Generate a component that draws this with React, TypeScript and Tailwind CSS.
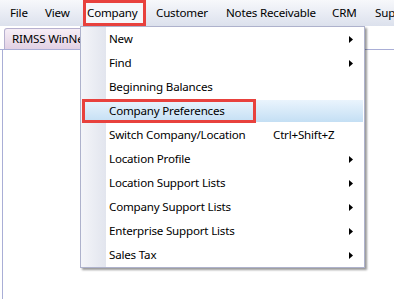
import React from "react";

const ITEMS: { label: string; shortcut?: string; sub?: boolean }[] = [
  { label: "New", sub: true },
  { label: "Find", sub: true },
  { label: "Beginning Balances" },
  { label: "Company Preferences" },
  { label: "Switch Company/Location", shortcut: "Ctrl+Shift+Z" },
  { label: "Location Profile", sub: true },
  { label: "Location Support Lists", sub: true },
  { label: "Company Support Lists", sub: true },
  { label: "Enterprise Support Lists", sub: true },
  { label: "Sales Tax", sub: true },
];

function Arrow() {
  return (
    <svg width="4" height="7" viewBox="0 0 4 7" className="block">
      <path d="M0 0 L4 3.5 L0 7 Z" fill="#000" />
    </svg>
  );
}

export default function App() {
  return (
    <div
      className="relative w-[394px] h-[299px] overflow-hidden bg-white text-[11.6px] tracking-[-0.2px] text-black"
      style={{ fontFamily: '"Noto Sans", sans-serif' }}
    >
      {/* Menu bar */}
      <div className="h-[26px] flex items-stretch bg-gradient-to-b from-[#f7f8fb] to-[#dce1ed] pl-[2px] whitespace-nowrap overflow-hidden">
        <div className="w-[35px] shrink-0 pl-[8px] flex items-center">File</div>
        <div className="w-[46px] shrink-0 pl-[8px] flex items-center">View</div>
        <div className="w-[63px] shrink-0 pl-[1px] flex items-center border-[3px] border-[#e8413d] bg-[#f6f7fa]">
          Company
        </div>
        <div className="w-[70px] shrink-0 pl-[10px] flex items-center">Customer</div>
        <div className="w-[96px] shrink-0 pl-[10px] flex items-center">Notes Receivable</div>
        <div className="w-[53px] shrink-0 pl-[20px] flex items-center">CRM</div>
        <div className="shrink-0 pl-[10px] flex items-center">Support</div>
      </div>

      {/* Tab strip */}
      <div className="h-[24px] flex items-end border-b border-[#a9aed6] pl-[4px]">
        <div className="h-[21px] w-[90px] flex items-center pl-[7px] rounded-t-[3px] border border-b-0 border-[#b6b0cf] bg-gradient-to-b from-[#f6eef6] to-[#e2d1e4] whitespace-nowrap">
          RIMSS WinNet
        </div>
      </div>
      <div className="h-[249px] ml-[2px] border-l border-[#a9aed6]" />

      {/* Dropdown */}
      <div className="absolute left-[80px] top-[26px] w-[285px] h-[242px] border border-[#aeb2cc] bg-white shadow-[2px_2px_2px_rgba(0,0,0,0.4)]">
        <div className="absolute left-0 top-0 bottom-0 w-[25px] bg-gradient-to-r from-[#f4f5f9] to-[#e2e5ee]" />
        <div className="relative">
          {ITEMS.map((it) => {
            const active = it.label === "Company Preferences";
            return (
              <div key={it.label} className="relative h-[24px] flex items-center whitespace-nowrap">
                {active && (
                  <div className="absolute left-[1px] right-[1px] top-[1px] bottom-[1px] bg-gradient-to-b from-[#eaf4fd] to-[#c4dff4]" />
                )}
                <span className="relative pl-[28px]">{it.label}</span>
                {it.shortcut && (
                  <span className="absolute left-[192px]">{it.shortcut}</span>
                )}
                {it.sub && (
                  <span className="absolute left-[268px] top-[9px]">
                    <Arrow />
                  </span>
                )}
                {active && (
                  <div className="absolute left-[1px] top-[0px] w-[174px] h-[24px] border-[3px] border-[#e8413d]" />
                )}
              </div>
            );
          })}
        </div>
      </div>
    </div>
  );
}
